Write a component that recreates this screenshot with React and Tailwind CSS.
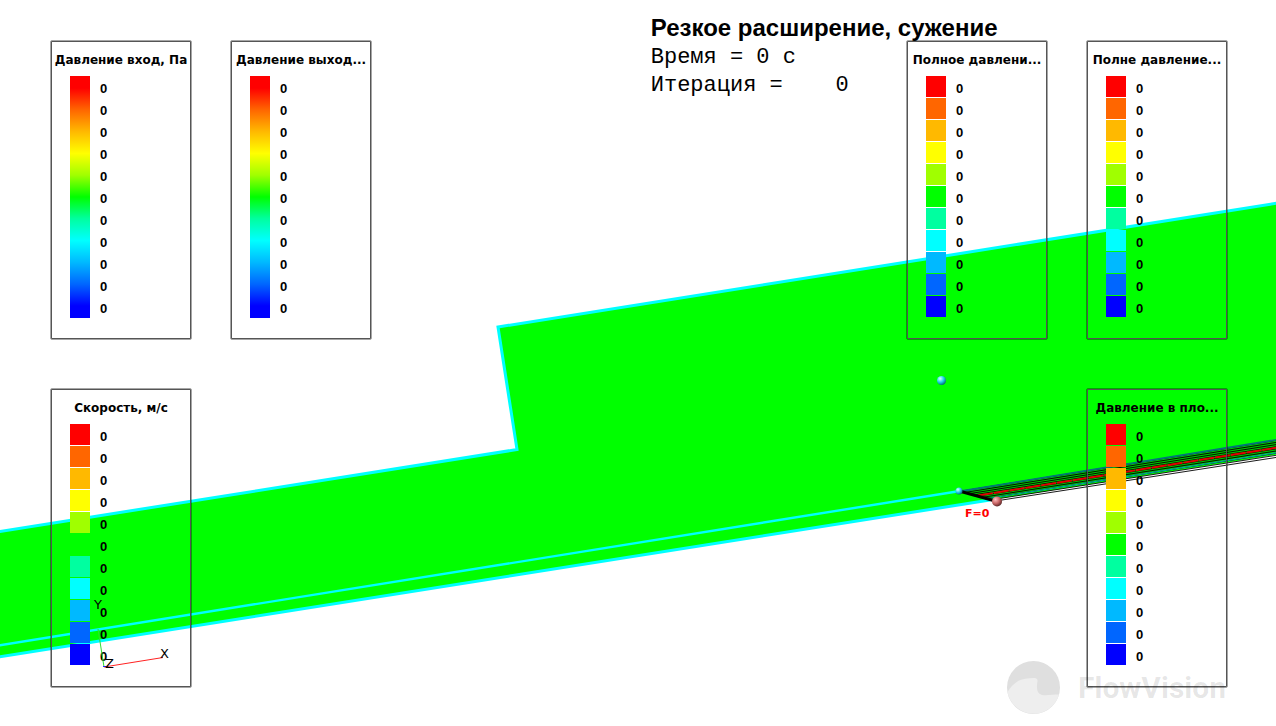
const BANDS = [
  'bg-[#ff0000]',
  'bg-[#ff6600]',
  'bg-[#ffb900]',
  'bg-[#ffff00]',
  'bg-[#a0ff00]',
  'bg-[#00ff00]',
  'bg-[#00ffa0]',
  'bg-[#00ffff]',
  'bg-[#00b9ff]',
  'bg-[#0066ff]',
  'bg-[#0000ff]',
];

const GRADIENT =
  'bg-[linear-gradient(to_bottom,#f00_0%,#f00_5%,#f60_14%,#ffb900_23%,#ff0_32%,#a0ff00_41%,#0f0_50%,#00ffa0_59%,#0ff_68%,#00b9ff_77%,#06f_86%,#00f_95%,#00f_100%)]';

function Legend({ title, smooth = false }) {
  return (
    <section className="h-[300px] w-[142px] shrink-0 rounded-xs border border-black/35 pt-[13px] inset-ring inset-ring-[#555]">
      <h2 className="text-center text-xs leading-3 font-bold whitespace-nowrap">{title}</h2>
      <div className="mt-2.5 flex gap-2.5 pl-[19px]">
        {smooth ? (
          <div className={`h-[242px] w-5 ${GRADIENT}`} />
        ) : (
          <div className="flex w-5 flex-col gap-px">
            {BANDS.map((color) => (
              <div key={color} className={`h-[21px] ${color}`} />
            ))}
          </div>
        )}
        <ol className="pt-0.5 font-['Liberation_Sans',sans-serif] text-[13px] leading-[22px] font-bold">
          {BANDS.map((color) => (
            <li key={color}>0</li>
          ))}
        </ol>
      </div>
    </section>
  );
}

const MESH = [0, 1, 2, 3, 4, 5, 6, 7, 8];

function Scene() {
  return (
    <svg
      className="absolute inset-0 h-full w-full"
      viewBox="0 0 1276 726"
      preserveAspectRatio="xMinYMin slice"
      aria-hidden="true"
    >
      <defs>
        <radialGradient id="cyanBall" cx="0.35" cy="0.3" r="0.8">
          <stop offset="0" stopColor="#d8ffff" />
          <stop offset="0.5" stopColor="#20d0e8" />
          <stop offset="1" stopColor="#045060" />
        </radialGradient>
        <radialGradient id="roseBall" cx="0.35" cy="0.3" r="0.8">
          <stop offset="0" stopColor="#ffc0c0" />
          <stop offset="0.5" stopColor="#c86464" />
          <stop offset="1" stopColor="#401818" />
        </radialGradient>
      </defs>
      <path d="M-5 532.3 517 449.5 498 327 1281 202.5V454L-5 657.5Z" fill="#0f0" />
      <g fill="none" stroke="#0ff" strokeWidth="3">
        <path d="M-5 532.3 517 449.5 498 327 1281 202.5" />
        <path d="M-5 657.5 990 500" />
        <path d="M-5 646 960 491" strokeWidth="2.4" />
      </g>
      <path d="M960 491 1281 439V451L985 499Z" fill="#00c400" />
      <g fill="none" stroke="#000" strokeWidth="0.9">
        {MESH.map((i) => (
          <path key={i} d={`M${962 + i * 4.2} ${491 + i * 1.25}L1281 ${439.5 + i * 2.15}`} />
        ))}
      </g>
      <path d="M962 491 1281 439" stroke="#007878" strokeWidth="1.8" />
      <path d="M985 499 1281 452" stroke="#00a0a0" strokeWidth="1.2" />
      <path d="M978 495.500 1281 447" stroke="#e00000" strokeWidth="2" strokeDasharray="15 1" />
      <path d="M961 491.5 997 501.5" stroke="#000" strokeWidth="3" />
      <circle cx="959" cy="491" r="3.5" fill="url(#cyanBall)" />
      <circle cx="941.5" cy="380.5" r="4.5" fill="url(#cyanBall)" />
      <circle cx="997" cy="501.5" r="5" fill="url(#roseBall)" />
      <text x="965" y="517" fill="#f00" fontSize="11" fontWeight="bold">F=0</text>
    </svg>
  );
}

function Axes() {
  return (
    <svg
      className="absolute inset-0 h-full w-full"
      viewBox="0 0 1276 726"
      preserveAspectRatio="xMinYMin slice"
      aria-hidden="true"
    >
      <path d="M104 667 98 629" stroke="#30e030" />
      <path d="M104 667 163 657.5" stroke="#f22" />
      <path d="M103 666.5h3" stroke="#22f" />
      <g fontSize="13">
        <text x="94" y="609">Y</text>
        <text x="105" y="668">Z</text>
        <text x="160" y="658">X</text>
      </g>
    </svg>
  );
}

function Watermark() {
  return (
    <div className="absolute right-[50px] bottom-3 flex items-center gap-[18px]">
      <svg className="size-[53px]" viewBox="0 0 53 53" aria-hidden="true">
        <circle cx="26.5" cy="26.5" r="26.5" fill="#dfdfdf" />
        <path
          d="M0.500 31C5 23 12 18 20 17.500C25 17 31 16 30.500 20C30 24 28 34 37 34.200C43 34.300 47 33.500 52 33.500A26.500 26.500 0 0 1 0.500 31Z"
          fill="#eee"
        />
      </svg>
      <span className="font-[Roboto,sans-serif] text-[30px] leading-8 font-bold text-black/10">
        FlowVision
      </span>
    </div>
  );
}

export default function App() {
  return (
    <main className="relative min-h-screen overflow-hidden bg-white font-['DejaVu_Sans',sans-serif] text-black">
      <Scene />
      <header className="absolute top-3.5 left-[51%] whitespace-pre">
        <h1 className="font-['Liberation_Sans',sans-serif] text-2xl leading-7 font-bold">
          Резкое расширение, сужение
        </h1>
        <div className="pt-0.5 font-['Liberation_Mono',monospace] text-[22px] leading-7">
          <p>Время = 0 с</p>
          <p>{'Итерация =    0'}</p>
        </div>
      </header>
      <div className="relative flex flex-col gap-12 pt-10 pr-12 pb-9 pl-[50px]">
        <div className="flex justify-between gap-10">
          <div className="flex gap-[38px]">
            <Legend title="Давление вход, Па" smooth />
            <Legend title="Давление выход..." smooth />
          </div>
          <div className="flex gap-[38px]">
            <Legend title="Полное давлени..." />
            <Legend title="Полне давление..." />
          </div>
        </div>
        <div className="flex justify-between">
          <Legend title="Скорость, м/с" />
          <Legend title="Давление в пло..." />
        </div>
      </div>
      <Axes />
      <Watermark />
    </main>
  );
}
